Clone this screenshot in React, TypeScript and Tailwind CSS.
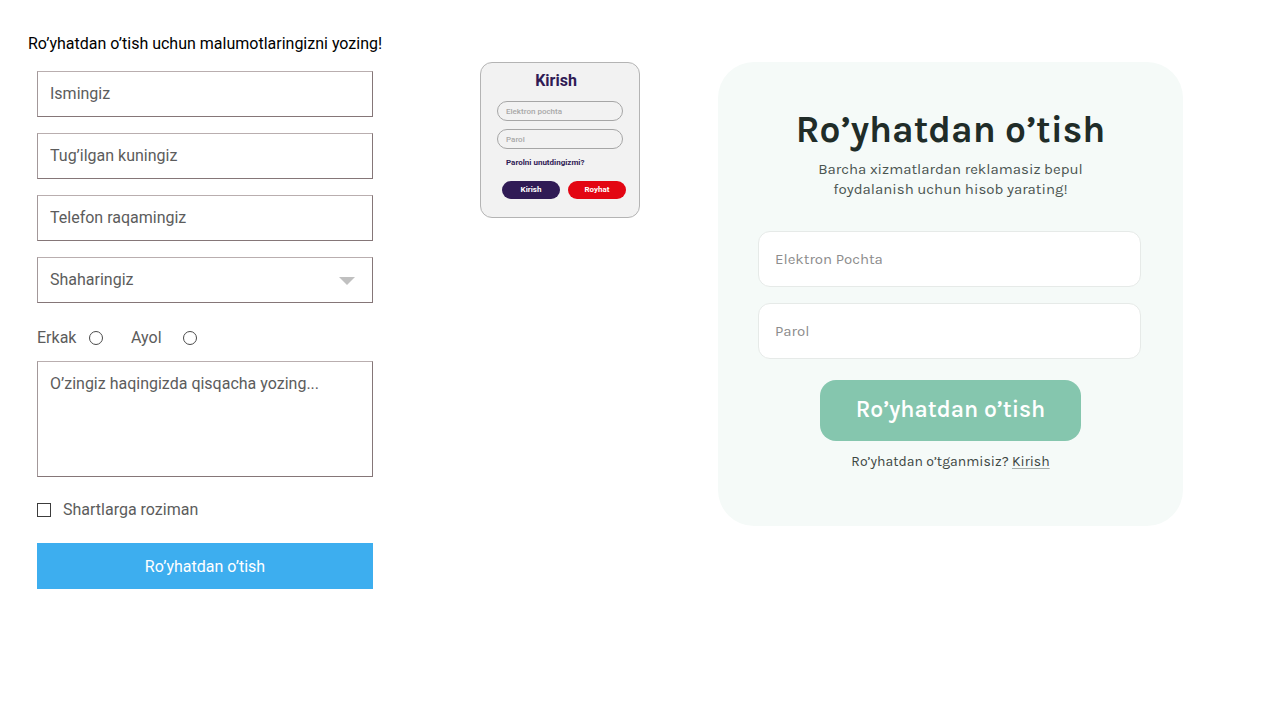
import React from "react";

const fieldClass =
  "block w-full appearance-none rounded-none border border-t-[#b9aeaf] border-l-[#a3989a] border-r-[#857678] border-b-[#857678] bg-white px-3 text-base text-[#5c5c5c] outline-none placeholder:text-[#5c5c5c] placeholder:opacity-100";

function TextField({ label, type = "text" }: { label: string; type?: string }) {
  return <input type={type} aria-label={label} placeholder={label} className={`${fieldClass} h-[46px] pb-0.5`} />;
}

function ProfileForm() {
  return (
    <section className="flex w-full max-w-[354px] flex-col items-center font-['Roboto',sans-serif]">
      <h2 className="text-center text-base leading-5 whitespace-nowrap text-black">
        Ro’yhatdan o’tish uchun malumotlaringizni yozing!
      </h2>
      <form className="w-full px-[9px] pt-[17px] text-[#5c5c5c]">
        <div className="flex flex-col gap-4">
          <TextField label="Ismingiz" />
          <TextField label="Tug’ilgan kuningiz" />
          <TextField label="Telefon raqamingiz" type="tel" />
          <div className="relative">
            <select aria-label="Shaharingiz" className={`${fieldClass} h-[46px]`}>
              <option>Shaharingiz</option>
            </select>
            <svg className="pointer-events-none absolute top-5 right-[18px]" width="16" height="8" viewBox="0 0 16 8" aria-hidden="true">
              <path d="M0 0H16L8 8Z" fill="#c0c0c0" />
            </svg>
          </div>
        </div>
        <div className="mt-[25px] flex items-center leading-5">
          <label htmlFor="male" className="w-[52px]">Erkak</label>
          <input id="male" type="radio" name="gender" className="size-3.5 appearance-none rounded-full border border-[#4a4a4a] bg-white checked:bg-[#4a4a4a]" />
          <label htmlFor="female" className="ml-7 w-[52px]">Ayol</label>
          <input id="female" type="radio" name="gender" className="size-3.5 appearance-none rounded-full border border-[#4a4a4a] bg-white checked:bg-[#4a4a4a]" />
        </div>
        <textarea
          aria-label="O’zingiz haqingizda qisqacha yozing..."
          placeholder="O’zingiz haqingizda qisqacha yozing..."
          className={`${fieldClass} mt-[13px] h-[116px] resize-none py-3 leading-5`}
        />
        <label className="mt-[23px] flex items-center gap-3 leading-5">
          <input type="checkbox" className="size-3.5 appearance-none border border-[#3c3c3c] bg-white checked:bg-[#3c3c3c]" />
          Shartlarga roziman
        </label>
        <button type="button" className="mt-[23px] h-[46px] w-full bg-[#3daeef] pt-0.5 text-base text-white">
          Ro’yhatdan o’tish
        </button>
      </form>
    </section>
  );
}

function LoginCard() {
  const input =
    "block h-5 w-full rounded-full border border-[#a6a6a6] bg-transparent px-2 text-[8px] font-medium text-[#a0a0a0] outline-none placeholder:text-[#a8a8a8] placeholder:opacity-100";
  return (
    <section className="mt-7 h-[156px] w-full max-w-40 rounded-xl border border-[#b4b4b4] bg-[#f2f2f2] font-['Roboto',sans-serif]">
      <form className="px-4 pt-2">
        <h2 className="pr-2 text-center text-base leading-5 font-bold text-[#301b55]">Kirish</h2>
        <div className="mt-2.5 flex flex-col gap-2">
          <input type="email" aria-label="Elektron pochta" placeholder="Elektron pochta" className={input} />
          <input type="password" aria-label="Parol" placeholder="Parol" className={input} />
        </div>
        <a href="#parol" className="mt-2 ml-[9px] block text-[8px] leading-3 font-bold text-[#301b55]">
          Parolni unutdingizmi?
        </a>
        <div className="mt-3 ml-[5px] flex gap-2">
          <button type="button" className="h-[18px] w-[58px] shrink-0 rounded-full bg-[#301b55] text-[8px] font-bold text-white">Kirish</button>
          <button type="button" className="h-[18px] w-[58px] shrink-0 rounded-full bg-[#e30613] text-[8px] font-bold text-white">Royhat</button>
        </div>
      </form>
    </section>
  );
}

function SignUpCard() {
  const input =
    "block h-14 w-full rounded-xl border border-[#e6eae8] bg-white px-4 text-[15px] text-[#8c8c8c] outline-none placeholder:text-[#8c8c8c] placeholder:opacity-100";
  return (
    <section className="mt-7 w-full rounded-[36px] bg-[#f5faf8] px-10 pt-11 pb-[54px] font-['Karla','Inter',sans-serif]">
      <form className="flex flex-col items-center">
        <h1 className="text-[37px] leading-12 font-bold whitespace-nowrap text-[#202c28]">Ro’yhatdan o’tish</h1>
        <p className="mt-[5px] text-center text-[15px] leading-5 text-[#4a5450]">
          Barcha xizmatlardan reklamasiz bepul
          <br />
          foydalanish uchun hisob yarating!
        </p>
        <div className="mt-8 flex w-full flex-col gap-4 pr-0.5">
          <input type="email" aria-label="Elektron Pochta" placeholder="Elektron Pochta" className={input} />
          <input type="password" aria-label="Parol" placeholder="Parol" className={input} />
        </div>
        <button type="button" className="mt-[21px] h-[61px] w-[261px] rounded-2xl bg-[#85c6ae] text-[23px] font-semibold text-white">
          Ro’yhatdan o’tish
        </button>
        <p className="mt-[11px] text-sm leading-5 text-[#3c4642]">
          Ro’yhatdan o’tganmisiz?{" "}
          <a href="#kirish" className="underline decoration-[#a5adaa] underline-offset-2">Kirish</a>
        </p>
      </form>
    </section>
  );
}

export default function App() {
  return (
    <main className="grid min-h-screen grid-cols-[452fr_238fr_465fr] items-start bg-white pt-[34px] pr-[97px] pl-7">
      <ProfileForm />
      <LoginCard />
      <SignUpCard />
    </main>
  );
}
